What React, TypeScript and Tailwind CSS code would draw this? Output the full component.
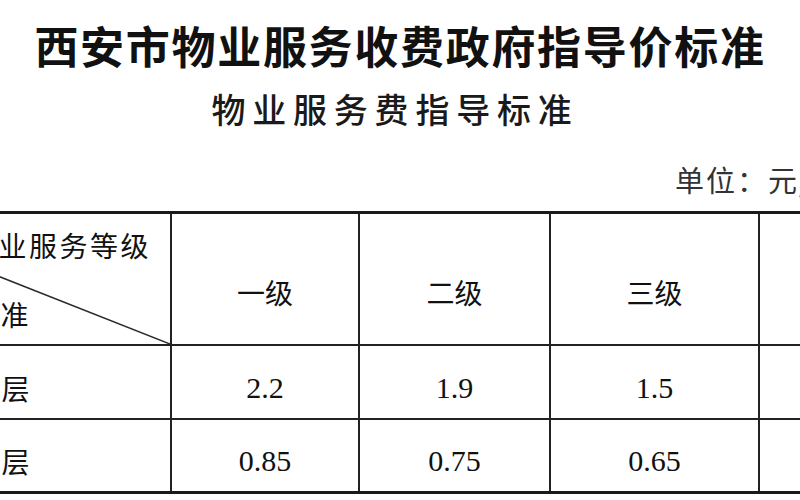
const cjk = { fontFamily: "'Noto Sans CJK SC', 'Noto Sans', sans-serif" }
const num = { fontFamily: "'Liberation Serif', 'Noto Sans CJK SC', serif" }

const levels = ['一级', '二级', '三级', '四级']
const widths = ['w-[188px]', 'w-[191px]', 'w-[209px]', 'w-[250px]']

const rows = [
  { label: '多层', values: ['2.2', '1.9', '1.5', '1.2'], h: 'h-[74px] border-b-2', pt: 'pt-[12px]' },
  { label: '高层', values: ['0.85', '0.75', '0.65', '0.55'], h: 'h-[71px]', pt: 'pt-[11px]' },
]

export default function App() {
  return (
    <div className="w-[800px] h-[500px] bg-white overflow-hidden text-[#111]" style={cjk}>
      {/* Heading */}
      <div className="pt-[23px] flex flex-col">
        <h1 className="h-[44px] text-[44px] leading-[44px] font-bold text-center tracking-[1.7px] whitespace-nowrap">
          西安市物业服务收费政府指导价标准
        </h1>
        <h2 className="mt-[25px] h-[34px] text-[34px] leading-[34px] font-medium text-center tracking-[6.8px] pr-[10px] whitespace-nowrap text-[#1a1a1a]">
          物业服务费指导标准
        </h2>
        <p className="mt-[39px] h-[29px] text-[29px] leading-[29px] pl-[675px] tracking-[2px] whitespace-nowrap text-[#333]">
          单位：元/平方米·月
        </p>
      </div>

      {/* Table */}
      <div className="mt-[17px] ml-[-159px] w-[1200px] border-t-[3px] border-b-[3px] border-[#1a1a1a]">
        <div className="flex h-[132px] border-b-2 border-[#222]">
          <div className="relative w-[331px] shrink-0 border-r-2 border-[#222] flex flex-col pt-[17px]">
            <svg className="absolute inset-0 w-full h-full" viewBox="0 0 100 100" preserveAspectRatio="none">
              <line x1="0" y1="0" x2="100" y2="100" stroke="#2a2a2a" strokeWidth="1.5" vectorEffect="non-scaling-stroke" />
            </svg>
            <div className="h-[28px] text-[28px] leading-[28px] text-right pr-[19px] tracking-[2.5px] whitespace-nowrap">
              物业服务等级
            </div>
            <div className="mt-[41px] h-[28px] text-[28px] leading-[28px] pl-[68px] tracking-[2.5px] whitespace-nowrap">
              收费标准
            </div>
          </div>
          {levels.map((lv, i) => (
            <div
              key={lv}
              className={`${widths[i]} shrink-0 border-r-2 border-[#222] flex items-center justify-center pt-[25px] text-[28px] leading-[28px]`}
            >
              {i < 3 ? lv : ''}
            </div>
          ))}
        </div>

        {rows.map(r => (
          <div key={r.label} className={`flex ${r.h} border-[#222]`}>
            <div className={`w-[331px] shrink-0 border-r-2 border-[#222] flex items-center ${r.pt} pl-[130px] text-[28px] leading-[28px] tracking-[2.5px]`}>
              {r.label}
            </div>
            {r.values.map((v, i) => (
              <div
                key={i}
                className={`${widths[i]} shrink-0 border-r-2 border-[#222] flex items-center justify-center ${r.pt} text-[30px] leading-[30px]`}
                style={num}
              >
                {i < 3 ? v : ''}
              </div>
            ))}
          </div>
        ))}
      </div>
    </div>
  )
}
